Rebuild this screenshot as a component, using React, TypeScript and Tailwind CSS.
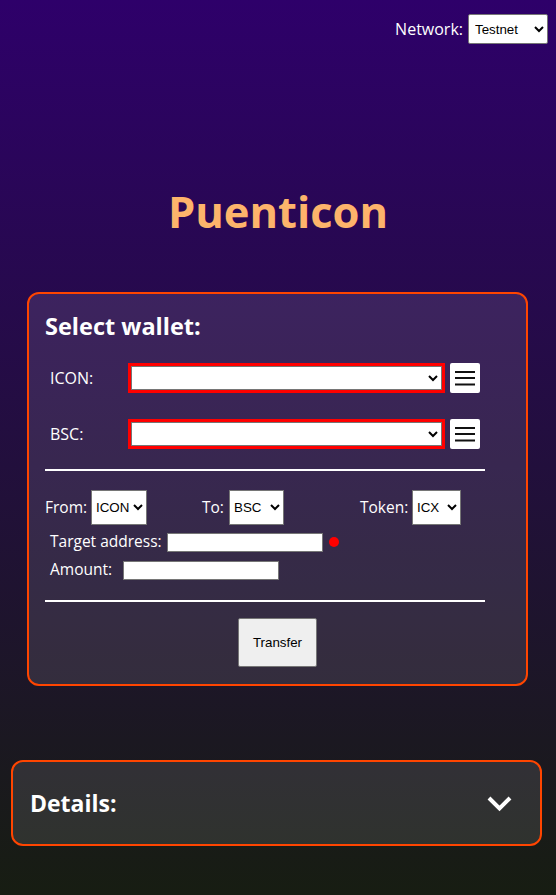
import React from "react";

function Hamburger() {
  return (
    <button className="ml-[5px] flex h-[30px] w-[30px] items-center justify-center rounded-[2px] bg-white">
      <svg width="20" height="16" viewBox="0 0 20 16">
        <rect x="0" y="1" width="20" height="2" fill="#111" />
        <rect x="0" y="7" width="20" height="2" fill="#111" />
        <rect x="0" y="13.5" width="20" height="2" fill="#111" />
      </svg>
    </button>
  );
}

const selCls =
  "bg-white text-black text-[13.33px] font-['Liberation_Sans',Arial,sans-serif] border border-[#767676] rounded-[2px]";

export default function App() {
  return (
    <div className="min-h-[895px] bg-[linear-gradient(to_bottom,#2e006a,#171d12)] font-['Open_Sans',sans-serif] text-white">
      <div className="flex items-center justify-end gap-[5px] pr-[8px] pt-[14px]">
        <span className="text-[16px] leading-[20px]">Network:</span>
        <select className={`${selCls} h-[30px] w-[80px] pl-[2px]`} defaultValue="Testnet">
          <option>Testnet</option>
          <option>Mainnet</option>
        </select>
      </div>

      <h1 className="mt-[140px] text-center text-[43.5px] font-bold leading-[56px] text-[#fdb46b]">
        Puenticon
      </h1>

      <div className="ml-[27px] mt-[52px] w-[501px] rounded-[12px] border-2 border-[#ff4500] bg-white/10 px-[16px] pb-[17px] pt-[16px]">
        <h2 className="text-[23.5px] font-bold leading-[32px]">Select wallet:</h2>

        <div className="mt-[21px] flex h-[30px] items-center pl-[5px]">
          <span className="w-[81px] text-[16px]">ICON:</span>
          <select
            className={`${selCls} h-[24px] w-[311px] rounded-none outline outline-[3px] outline-[#ff0000]`}
            defaultValue=""
          >
            <option value=""></option>
          </select>
          <span className="ml-[3px]" />
          <Hamburger />
        </div>

        <div className="mt-[26px] flex h-[30px] items-center pl-[5px]">
          <span className="w-[81px] text-[16px]">BSC:</span>
          <select
            className={`${selCls} h-[24px] w-[311px] rounded-none outline outline-[3px] outline-[#ff0000]`}
            defaultValue=""
          >
            <option value=""></option>
          </select>
          <span className="ml-[3px]" />
          <Hamburger />
        </div>

        <div className="mt-[20px] h-[2px] w-[440px] bg-white" />

        <div className="mt-[19px] flex h-[35px] items-center">
          <div className="flex w-[157px] items-center">
            <span className="w-[46px] whitespace-nowrap text-[15.5px]">From:</span>
            <select className={`${selCls} h-[35px] w-[56px] rounded-none`} defaultValue="ICON">
              <option>ICON</option>
              <option>BSC</option>
            </select>
          </div>
          <div className="flex w-[158px] items-center">
            <span className="w-[27px] whitespace-nowrap text-[15.5px]">To:</span>
            <select className={`${selCls} h-[35px] w-[55px] rounded-none`} defaultValue="BSC">
              <option>BSC</option>
              <option>ICON</option>
            </select>
          </div>
          <div className="flex items-center">
            <span className="w-[52px] whitespace-nowrap text-[15.5px]">Token:</span>
            <select className={`${selCls} h-[35px] w-[49px] rounded-none`} defaultValue="ICX">
              <option>ICX</option>
            </select>
          </div>
        </div>

        <div className="mt-[6px] flex h-[22px] items-center pl-[5px]">
          <span className="w-[117px] whitespace-nowrap text-[15.5px]">Target address:</span>
          <input className="h-[19px] w-[156px] border border-[#767676] bg-white" />
          <span className="ml-[6px] h-[10px] w-[10px] rounded-full bg-[#ff0000]" />
        </div>

        <div className="mt-[6px] flex h-[22px] items-center pl-[5px]">
          <span className="w-[73px] whitespace-nowrap text-[15.5px]">Amount:</span>
          <input className="h-[19px] w-[156px] border border-[#767676] bg-white" />
        </div>

        <div className="mt-[19px] h-[2px] w-[440px] bg-white" />

        <div className="mt-[16px] flex justify-center">
          <button className="h-[49px] w-[79px] rounded-[2px] border border-[#767676] bg-[#efefef] font-['Liberation_Sans',Arial,sans-serif] text-[13.33px] text-black">
            Transfer
          </button>
        </div>
      </div>

      <div className="ml-[11px] mt-[74px] flex h-[86px] w-[531px] items-center justify-between rounded-[12px] border-2 border-[#ff4500] bg-white/10 pl-[17px] pr-[27px]">
        <h2 className="text-[23px] font-bold leading-[32px]">Details:</h2>
        <svg width="27" height="19" viewBox="0 0 27 19">
          <path d="M3 4 L13.5 14.5 L24 4" fill="none" stroke="white" strokeWidth="4" strokeLinecap="butt" strokeLinejoin="miter" />
        </svg>
      </div>
    </div>
  );
}
